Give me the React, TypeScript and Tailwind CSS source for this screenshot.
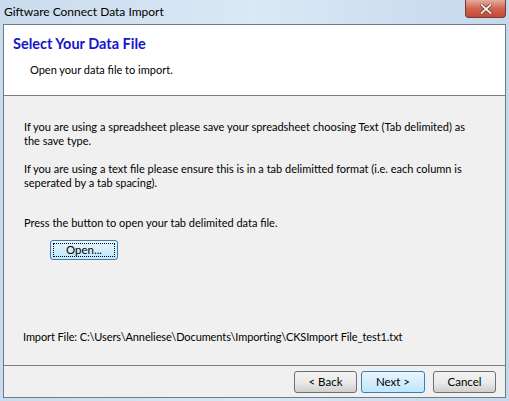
import React from 'react';

const font = { fontFamily: 'Lato, "Open Sans", sans-serif' };

const WinButton = ({ label, focused = false, dotted = false, className = '' }: { label: string; focused?: boolean; dotted?: boolean; className?: string }) => (
  <div
    className={`flex items-center justify-center rounded-[3px] border text-[11.5px] text-black ${
      focused
        ? 'border-[#3c7fb1] bg-gradient-to-b from-[#eaf6fd] to-[#bee6fd]'
        : 'border-[#707070] bg-gradient-to-b from-[#f2f2f2] via-[#ebebeb] to-[#cfcfcf]'
    } ${className}`}
  >
    {dotted ? (
      <div className="flex h-[calc(100%-4px)] w-[calc(100%-4px)] items-center justify-center border border-dotted border-black">
        {label}
      </div>
    ) : (
      label
    )}
  </div>
);

export default function App() {
  return (
    <div className="flex h-[401px] w-[509px] flex-col overflow-hidden bg-gradient-to-r from-[#cadbee] via-[#dbe8f5] to-[#c4d7ec]" style={font}>
      {/* title bar */}
      <div className="relative flex h-[24px] shrink-0 items-center pl-[4px] text-[12px] text-black">
        Giftware Connect Data Import
        <div className="absolute right-[3px] top-0 flex h-[18px] w-[41px] items-center justify-center rounded-b-[4px] border border-t-0 border-[#7a3b2f] bg-gradient-to-b from-[#e3ab9f] via-[#cf6450] to-[#c24a35]">
          <svg width="12" height="10" viewBox="0 0 12 10">
            <path d="M1.5 1 L10.5 9 M10.5 1 L1.5 9" stroke="#6a2a20" strokeWidth="3.2" strokeLinecap="square" />
            <path d="M1.5 1 L10.5 9 M10.5 1 L1.5 9" stroke="#f4f4f4" strokeWidth="1.8" strokeLinecap="square" />
          </svg>
        </div>
      </div>

      {/* client area */}
      <div className="mx-[3px] mb-[3px] flex flex-1 flex-col border border-[#6f7b89] bg-[#f0f0f0]">
        <div className="flex h-[71px] shrink-0 flex-col border-b border-[#7f7f7f] bg-white">
          <div className="pl-[9px] pt-[8px] text-[14.5px] font-bold leading-[22px] text-[#1515c8]">Select Your Data File</div>
          <div className="pl-[26px] pt-[7px] text-[11px] leading-[16px] text-black">Open your data file to import.</div>
        </div>

        <div className="flex flex-1 flex-col border-b border-[#7f7f7f] pl-[20px] pr-[24px] pt-[24px] text-[11px] leading-[14px] text-black">
          <p>If you are using a spreadsheet please save your spreadsheet choosing Text (Tab delimited) as the save type.</p>
          <p className="mt-[14px]">If you are using a text file please ensure this is in a tab delimitted format (i.e. each column is seperated by a tab spacing).</p>
          <p className="mt-[26px]">Press the button to open your tab delimited data file.</p>
          <WinButton label="Open..." focused dotted className="ml-[26px] mt-[10px] h-[20px] w-[68px]" />
          <div className="flex-1" />
          <p className="mb-[21px] -ml-[1px] tracking-[-0.1px]">Import File: C:\Users\Anneliese\Documents\Importing\CKSImport File_test1.txt</p>
        </div>

        <div className="flex h-[31px] shrink-0 items-center justify-end gap-[4px] pr-[9px]">
          <WinButton label="< Back" className="h-[22px] w-[63px]" />
          <WinButton label="Next >" focused className="h-[22px] w-[64px]" />
          <WinButton label="Cancel" className="ml-[4px] h-[22px] w-[63px]" />
        </div>
      </div>
    </div>
  );
}
